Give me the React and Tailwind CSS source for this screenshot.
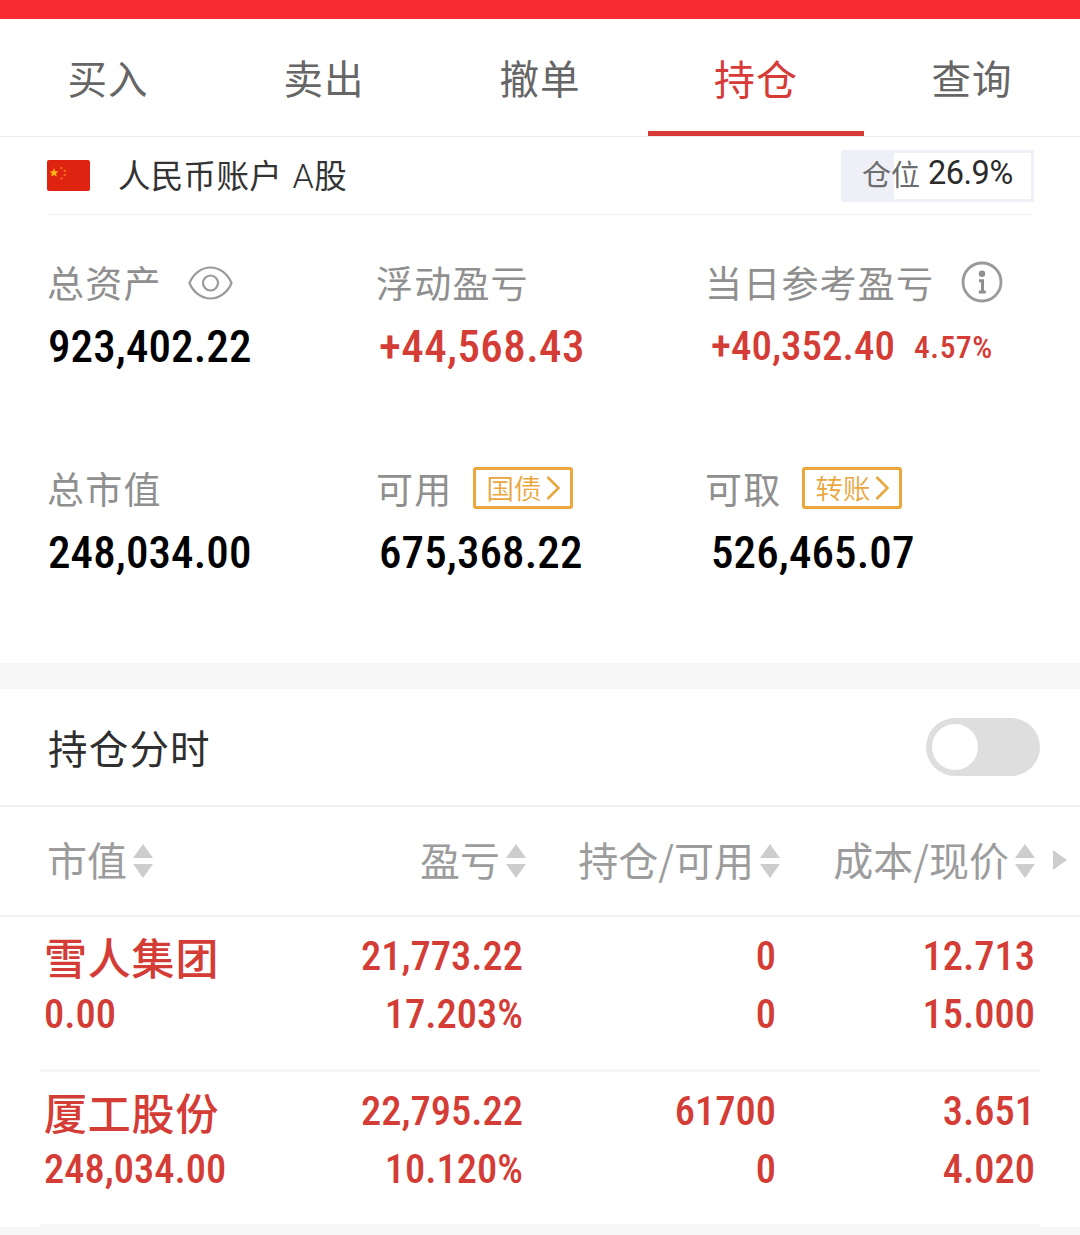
import { useState } from "react";
import clsx from "clsx";

const TABS = ["买入", "卖出", "撤单", "持仓", "查询"];

const HOLDINGS = [
  { name: "雪人集团", value: "0.00", profit: "21,773.22", rate: "17.203%", held: "0", usable: "0", cost: "12.713", price: "15.000" },
  { name: "厦工股份", value: "248,034.00", profit: "22,795.22", rate: "10.120%", held: "61700", usable: "0", cost: "3.651", price: "4.020" },
];

// Condensed figures used for every amount
function Num({ children, className }) {
  return (
    <span className={clsx("block font-['Roboto',sans-serif] font-medium leading-none whitespace-nowrap [font-stretch:85%]", className)}>
      {children}
    </span>
  );
}

function Flag() {
  return (
    <svg width="43" height="31" viewBox="0 0 43 31" className="-mt-px shrink-0">
      <rect width="43" height="31" rx="2" fill="#de2410" />
      <path d="M7 8.300l1.300 2.900 3.100.3-2.300 2 .7 3.100L7 15l-2.800 1.600.7-3.100-2.300-2 3.100-.3z" fill="#fcb414" />
      <g fill="#f0641a">
        <circle cx="14.500" cy="8" r="1.300" />
        <circle cx="17.800" cy="10.800" r="1.300" />
        <circle cx="17.800" cy="15" r="1.300" />
        <circle cx="14.500" cy="18.500" r="1.300" />
      </g>
    </svg>
  );
}

function EyeIcon() {
  return (
    <svg width="45" height="34" viewBox="0 0 45 34" fill="none" stroke="#9a9a9a" strokeWidth="2.200" strokeLinejoin="round">
      <path d="M1.500 17C5 8 13.500 1.500 22.500 1.500S40 8 43.500 17C40 26 31.500 32.500 22.500 32.500S5 26 1.500 17z" />
      <circle cx="22.500" cy="17" r="7.500" />
    </svg>
  );
}

function InfoIcon() {
  return (
    <svg width="42" height="42" viewBox="0 0 42 42" fill="none">
      <circle cx="21" cy="21" r="19" stroke="#9a9a9a" strokeWidth="2.800" />
      <circle cx="21" cy="12.800" r="3.200" fill="#8f8f8f" />
      <path d="M18 19.800h3.500V31M17.800 31h7" stroke="#8f8f8f" strokeWidth="3" />
    </svg>
  );
}

function SortIcon() {
  return (
    <svg width="20" height="34" viewBox="0 0 20 34" fill="#cdcdcd" className="shrink-0">
      <path d="M10 0l10 14H0zM10 34L0 20h20z" />
    </svg>
  );
}

function LinkTag({ children }) {
  return (
    <button className="-mt-[2px] ml-[21px] flex h-[42px] w-[100px] items-center justify-center gap-[5px] rounded-[3px] border-3 border-[#eba63c] text-[27.500px] leading-none font-[350] tracking-normal text-[#eba63c]">
      <span className="-mt-px">{children}</span>
      <svg width="14" height="24" viewBox="0 0 14 24" fill="none" stroke="currentColor" strokeWidth="2.600">
        <path d="M1.500 1l11 11-11 11" />
      </svg>
    </button>
  );
}

function Asset({ label, extra, className, children }) {
  return (
    <div>
      <div className="flex h-[42px] items-center text-[37px] leading-none tracking-[1.200px] whitespace-nowrap text-[#8f8f8f]">
        <span className="-mt-[2px] -ml-px">{label}</span>
        {extra}
      </div>
      <div className={clsx("mt-[19px] flex h-[46px] items-center", className)}>{children}</div>
    </div>
  );
}

function HeadCell({ children, className }) {
  return (
    <div className={clsx("flex items-center justify-end gap-[6px] whitespace-nowrap", className)}>
      <span className="-mt-[4px]">{children}</span>
      <SortIcon />
    </div>
  );
}

function HoldingRow({ item }) {
  return (
    <div className="mx-[40px] grid h-[155px] grid-cols-[229px_250px_253px_259px] grid-rows-[58px_58px] border-b-[3px] border-[#f8f5f5] pt-[10px] pl-[4px] text-[40.500px] text-[#d43c36] [&>*]:self-center">
      <div className="text-[43px] leading-none font-medium tracking-[0.800px]">{item.name}</div>
      <Num className="text-right">{item.profit}</Num>
      <Num className="text-right">{item.held}</Num>
      <Num className="text-right">{item.cost}</Num>
      <Num>{item.value}</Num>
      <Num className="text-right">{item.rate}</Num>
      <Num className="text-right">{item.usable}</Num>
      <Num className="text-right">{item.price}</Num>
    </div>
  );
}

export default function App() {
  const [tab, setTab] = useState("持仓");
  const [intraday, setIntraday] = useState(false);

  return (
    <div className="h-[1235px] w-[1080px] overflow-hidden bg-white font-['Noto_Sans_CJK_SC',sans-serif]">
      <div className="h-[19px] bg-[#fa2c33]" />

      {/* Trade tabs */}
      <nav className="grid h-[118px] grid-cols-5 border-b border-[#ececec]">
        {TABS.map((t) => (
          <button
            key={t}
            onClick={() => setTab(t)}
            className={clsx(
              "border-b-[5px] pt-[4px] leading-none tracking-[1px]",
              t === tab ? "border-[#d83a38] text-[41px] text-[#d83a38]" : "border-transparent text-[39.500px] text-[#666]"
            )}
          >
            {t}
          </button>
        ))}
      </nav>

      {/* Account */}
      <div className="mx-[47px] flex h-[78px] items-center border-b border-[#f2f2f2]">
        <Flag />
        <span className="ml-[28px] text-[32.500px] leading-none tracking-[0.300px] text-[#333]">
          人民币账户 <span className="ml-[3px] font-['Roboto',sans-serif] text-[34px] font-[350]">A</span>股
        </span>
        <div className="-mr-px ml-auto flex h-[52px] w-[193px] items-center border-[3px] border-[#efeff7] bg-linear-to-r from-[#efeff7] from-[27%] to-white to-[27%] pb-[4px] pl-[18px] leading-none">
          <span className="text-[29px] text-[#6c6c6c]">仓位</span>
          <span className="ml-[8px] font-['Roboto',sans-serif] text-[32.500px] tracking-[-0.500px] text-[#2b2b2b]">26.9%</span>
        </div>
      </div>

      {/* Assets */}
      <div className="grid h-[448px] grid-cols-[329px_329px_1fr] grid-rows-[206px_206px] pt-[47px] pl-[48px]">
        <Asset label="总资产" extra={<span className="ml-[26px]"><EyeIcon /></span>}>
          <Num className="text-[45px] tracking-[0.100px] text-black">923,402.22</Num>
        </Asset>
        <Asset label="浮动盈亏" className="pl-[2px]">
          <Num className="text-[45px] tracking-[0.400px] text-[#d43c36]">+44,568.43</Num>
        </Asset>
        <Asset label="当日参考盈亏" extra={<span className="-mt-[2px] ml-[27px]"><InfoIcon /></span>} className="pl-[5px]">
          <Num className="text-[41px] text-[#d43c36]">+40,352.40</Num>
          <Num className="mt-[4px] ml-[19px] text-[31.500px] tracking-[0.600px] text-[#d43c36]">4.57%</Num>
        </Asset>
        <Asset label="总市值">
          <Num className="text-[45px] tracking-[0.100px] text-black">248,034.00</Num>
        </Asset>
        <Asset label="可用" extra={<LinkTag>国债</LinkTag>} className="pl-[2px]">
          <Num className="text-[45px] tracking-[0.100px] text-black">675,368.22</Num>
        </Asset>
        <Asset label="可取" extra={<LinkTag>转账</LinkTag>} className="pl-[5px]">
          <Num className="text-[45px] tracking-[0.100px] text-black">526,465.07</Num>
        </Asset>
      </div>

      <div className="h-[26px] bg-[#f6f6f6]" />

      {/* Intraday switch */}
      <div className="flex h-[118px] items-center justify-between border-b-[2px] border-[#f2f2f2] pr-[40px] pl-[48px]">
        <span className="text-[39.500px] leading-none tracking-[1.200px] text-[#2f2f2f]">持仓分时</span>
        <button
          role="switch"
          aria-checked={intraday}
          aria-label="持仓分时"
          onClick={() => setIntraday(!intraday)}
          className={clsx("flex h-[58px] w-[114px] items-center rounded-full bg-[#dedede] px-[6px]", intraday && "justify-end")}
        >
          <span className="size-[46px] rounded-full bg-white" />
        </button>
      </div>

      {/* Holdings table */}
      <div className="flex h-[110px] items-center border-b-[2px] border-[#f2f2f2] text-[40px] leading-none text-[#9c9c9c]">
        <HeadCell className="ml-[47px] w-[106px]">市值</HeadCell>
        <HeadCell className="w-[373px]">盈亏</HeadCell>
        <HeadCell className="w-[254px]">持仓/可用</HeadCell>
        <HeadCell className="w-[255px]">成本/现价</HeadCell>
        <svg width="14" height="20" viewBox="0 0 14 20" fill="#cdcdcd" className="-mt-[2px] ml-[18px]">
          <path d="M0 0l14 10L0 20z" />
        </svg>
      </div>
      {HOLDINGS.map((item) => (
        <HoldingRow key={item.name} item={item} />
      ))}
      <div className="h-[9px] bg-[#f6f6f6]" />
    </div>
  );
}
